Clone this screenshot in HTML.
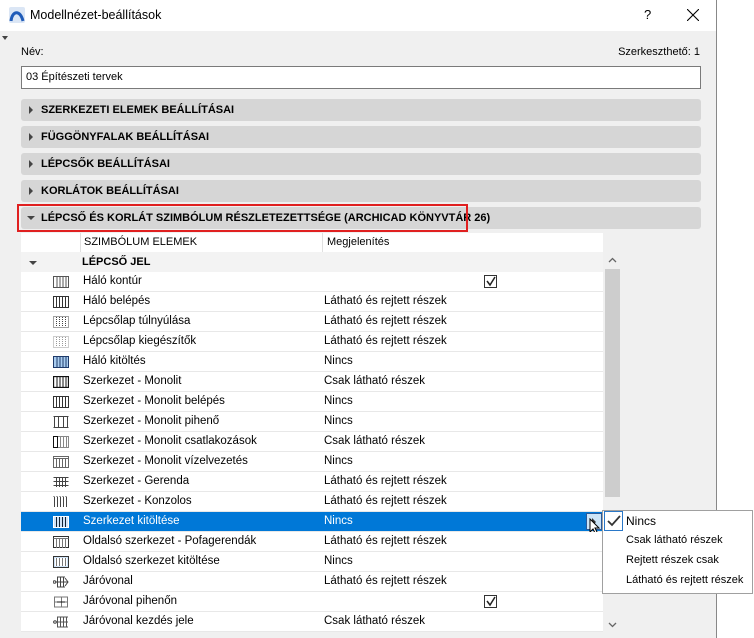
<!DOCTYPE html>
<html><head><meta charset="utf-8"><style>
*{margin:0;padding:0;box-sizing:border-box}
body{width:754px;height:638px;background:#fff;font-family:"Liberation Sans",sans-serif;font-size:12px;color:#000;position:relative;overflow:hidden}
.a{position:absolute}
.dlg{left:0;top:0;width:717px;height:638px;background:#f0f0f0;border-right:1px solid #888}
.title{left:0;top:0;width:716px;height:31px;background:#fff}
.bar{left:21px;width:680px;height:22px;background:#d6d6d6;border-radius:3px;font-weight:bold;font-size:11px;line-height:22px;padding-left:20px}
.bar:before{content:"";position:absolute;left:8px;top:7px;border-left:4px solid #444;border-top:4px solid transparent;border-bottom:4px solid transparent}
.bar.open:before{left:6px;top:9px;border-top:4px solid #444;border-left:4px solid transparent;border-right:4px solid transparent;border-bottom:0}
.row{left:21px;width:582px;height:20px;border-bottom:1px solid #e8e8e8;background:#fff;line-height:19px;font-size:11.5px}
.row .t{position:absolute;left:62px}
.row .v{position:absolute;left:303px}
.row svg{position:absolute;left:32px;top:4px}
.cb{position:absolute;left:463px;top:3px;width:13px;height:13px;border:1px solid #333;background:#fff}
.sel{background:#0078d7;color:#fff}
.mi{left:626px;font-size:12px}
</style></head><body>
<div class="a dlg"></div>
<div class="a title"></div>
<svg class="a" style="left:9px;top:7px" width="16" height="16"><rect x="0" y="0" width="16" height="16" rx="2" fill="#dbe6f5"/><path d="M2 14 C3 4 11 2 14 14" stroke="#1f5bb8" stroke-width="3" fill="none"/></svg>
<div class="a" style="left:30px;top:8px;font-size:12.5px">Modellnézet-beállítások</div>
<div class="a" style="left:644px;top:7px;font-size:13px">?</div>
<svg class="a" style="left:687px;top:9px" width="12" height="12"><path d="M0 0L12 12M12 0L0 12" stroke="#000" stroke-width="1.1"/></svg>
<div class="a" style="left:2px;top:36px;border-top:4px solid #444;border-left:3px solid transparent;border-right:3px solid transparent"></div>
<div class="a" style="left:21px;top:46px;font-size:11px">Név:</div>
<div class="a" style="right:54px;top:46px;font-size:11px">Szerkeszthető: 1</div>
<div class="a" style="left:21px;top:66px;width:680px;height:23px;background:#fff;border:1px solid #7a7a7a;padding-left:4px;line-height:20px;font-size:11px">03 Építészeti tervek</div>
<div class="a bar" style="top:99px">SZERKEZETI ELEMEK BEÁLLÍTÁSAI</div>
<div class="a bar" style="top:126px">FÜGGÖNYFALAK BEÁLLÍTÁSAI</div>
<div class="a bar" style="top:153px">LÉPCSŐK BEÁLLÍTÁSAI</div>
<div class="a bar" style="top:180px">KORLÁTOK BEÁLLÍTÁSAI</div>
<div class="a bar open" style="top:207px">LÉPCSŐ ÉS KORLÁT SZIMBÓLUM RÉSZLETEZETTSÉGE (ARCHICAD KÖNYVTÁR 26)</div>
<div class="a" style="left:17px;top:204px;width:451px;height:28px;border:2px solid #e02020"></div>
<div class="a" style="left:21px;top:233px;width:582px;height:19px;background:#fff;font-size:11px;line-height:19px">
<div class="a" style="left:59px;top:0;height:19px;border-left:1px solid #e0e0e0;padding-left:3px">SZIMBÓLUM ELEMEK</div>
<div class="a" style="left:301px;top:0;height:19px;border-left:1px solid #e0e0e0;padding-left:4px">Megjelenítés</div>
</div>
<div class="a" style="left:21px;top:252px;width:582px;height:20px;background:#f3f3f3;font-weight:bold;font-size:11px;line-height:20px">
<div class="a" style="left:8px;top:9px;border-top:4px solid #444;border-left:4px solid transparent;border-right:4px solid transparent"></div>
<span class="a" style="left:61px">LÉPCSŐ JEL</span></div>

<div class="a row" style="top:272px"><svg width="16" height="12"><rect x=".5" y=".5" width="15" height="11" fill="none" stroke="#555"/><path d="M4 1v10M7 1v10M10 1v10M13 1v10" stroke="#555"/></svg><span class="t">Háló kontúr</span><div class="cb" style="left:463px"><svg width="11" height="11" style="left:0;top:0"><path d="M2 5l3 4 5-8" stroke="#222" stroke-width="1.5" fill="none"/></svg></div></div>
<div class="a row" style="top:292px"><svg width="16" height="12"><rect x=".5" y=".5" width="15" height="11" fill="none" stroke="#333"/><path d="M3.5 1v10M6.5 1v10M9.5 1v10M12.5 1v10" stroke="#333"/></svg><span class="t">Háló belépés</span><span class="v">Látható és rejtett részek</span></div>
<div class="a row" style="top:312px"><svg width="16" height="12"><rect x=".5" y=".5" width="15" height="11" fill="none" stroke="#444" stroke-dasharray="1 1"/><path d="M3.5 1v10M6.5 1v10M9.5 1v10M12.5 1v10" stroke="#444" stroke-dasharray="1 1"/></svg><span class="t">Lépcsőlap túlnyúlása</span><span class="v">Látható és rejtett részek</span></div>
<div class="a row" style="top:332px"><svg width="16" height="12"><rect x=".5" y=".5" width="15" height="11" fill="none" stroke="#999" stroke-dasharray="1 1"/><path d="M3.5 1v10M6.5 1v10M9.5 1v10M12.5 1v10" stroke="#999" stroke-dasharray="1 1"/></svg><span class="t">Lépcsőlap kiegészítők</span><span class="v">Látható és rejtett részek</span></div>
<div class="a row" style="top:352px"><svg width="16" height="12"><rect x=".5" y=".5" width="15" height="11" fill="#a9cdf0" stroke="#1e3a6a"/><path d="M4 1v10M7 1v10M10 1v10M13 1v10" stroke="#1e3a6a"/></svg><span class="t">Háló kitöltés</span><span class="v">Nincs</span></div>
<div class="a row" style="top:372px"><svg width="16" height="12"><rect x=".5" y=".5" width="15" height="11" fill="none" stroke="#111" stroke-width="1.3"/><path d="M4 1v10M7 1v10M10 1v10M13 1v10" stroke="#111"/></svg><span class="t">Szerkezet - Monolit</span><span class="v">Csak látható részek</span></div>
<div class="a row" style="top:392px"><svg width="16" height="12"><rect x=".5" y=".5" width="15" height="11" fill="none" stroke="#333"/><path d="M3.5 1v10M6.5 1v10M9.5 1v10M12.5 1v10" stroke="#333"/></svg><span class="t">Szerkezet - Monolit belépés</span><span class="v">Nincs</span></div>
<div class="a row" style="top:412px"><svg width="16" height="12"><path d="M.5 .5h15M.5 11.5h15M1.5 1v10M5.5 1v10M10.5 1v10M14.5 1v10" stroke="#444"/></svg><span class="t">Szerkezet - Monolit pihenő</span><span class="v">Nincs</span></div>
<div class="a row" style="top:432px"><svg width="16" height="12"><rect x=".5" y=".5" width="15" height="11" fill="none" stroke="#888"/><rect x=".5" y=".5" width="4" height="11" fill="none" stroke="#111"/><path d="M7.5 1v10M10.5 1v10M13.5 1v10" stroke="#888"/></svg><span class="t">Szerkezet - Monolit csatlakozások</span><span class="v">Csak látható részek</span></div>
<div class="a row" style="top:452px"><svg width="16" height="12"><rect x=".5" y=".5" width="15" height="11" fill="none" stroke="#666"/><path d="M.5 2.5h15M3.5 2v10M6.5 2v10M9.5 2v10M12.5 2v10" stroke="#666"/></svg><span class="t">Szerkezet - Monolit vízelvezetés</span><span class="v">Nincs</span></div>
<div class="a row" style="top:472px"><svg width="16" height="12"><path d="M.5 1.5h15M.5 5.5h15M.5 9.5h15M3.5 1v10M6.5 1v10M9.5 1v10M12.5 1v10" stroke="#444"/></svg><span class="t">Szerkezet - Gerenda</span><span class="v">Látható és rejtett részek</span></div>
<div class="a row" style="top:492px"><svg width="16" height="12"><path d="M1.5 1v10M4.5 1v10M7.5 1v10M10.5 1v10M13.5 1v10" stroke="#444"/><path d="M.5 .5h15" stroke="#444" stroke-dasharray="1 2"/></svg><span class="t">Szerkezet - Konzolos</span><span class="v">Látható és rejtett részek</span></div>
<div class="a row sel" style="top:512px"><svg width="16" height="12"><rect x=".5" y=".5" width="15" height="11" fill="#cfe3f7" stroke="#fff"/><path d="M3.5 1v10M6.5 1v10M9.5 1v10M12.5 1v10" stroke="#123"/></svg><span class="t">Szerkezet kitöltése</span><span class="v">Nincs</span>
<div class="a" style="left:565px;top:1px;width:16px;height:17px;background:#cce4f7;border:1px solid #2a5a9a"></div><div class="a" style="left:571px;top:6px;border-left:4px solid #333;border-top:4px solid transparent;border-bottom:4px solid transparent"></div>
<svg class="a" style="left:568px;top:6px" width="12" height="18"><path d="M1 1v13l3-3 3 6 2-1-3-6h4z" fill="#fff" stroke="#000"/></svg></div>
<div class="a row" style="top:532px"><svg width="16" height="12"><rect x=".5" y=".5" width="15" height="11" fill="none" stroke="#333"/><path d="M.5 2.5h15M3.5 2v10M6.5 2v10M9.5 2v10M12.5 2v10" stroke="#777"/></svg><span class="t">Oldalsó szerkezet - Pofagerendák</span><span class="v">Látható és rejtett részek</span></div>
<div class="a row" style="top:552px"><svg width="16" height="12"><rect x=".5" y=".5" width="15" height="11" fill="#cfe3f7" stroke="#333"/><rect x="2" y="2" width="12" height="8" fill="#fff"/><path d="M3.5 2v8M6.5 2v8M9.5 2v8M12.5 2v8" stroke="#777"/></svg><span class="t">Oldalsó szerkezet kitöltése</span><span class="v">Nincs</span></div>
<div class="a row" style="top:572px"><svg width="16" height="12"><path d="M4.5 1v10M7.5 1v10M10.5 1v10M4 1h8M4 11h8M0 6h15M12 2l3 4-3 4" stroke="#444" fill="none"/><circle cx="1.5" cy="6" r="1.3" fill="#fff" stroke="#444"/></svg><span class="t">Járóvonal</span><span class="v">Látható és rejtett részek</span></div>
<div class="a row" style="top:592px"><svg width="16" height="12"><path d="M1.5 1v10M14.5 1v10M8.5 1v10M1 1h14M1 11h14M1 6h14" stroke="#777" fill="none"/><path d="M4 6h8" stroke="#111"/></svg><span class="t">Járóvonal pihenőn</span><div class="cb" style="left:463px"><svg width="11" height="11" style="left:0;top:0"><path d="M2 5l3 4 5-8" stroke="#222" stroke-width="1.5" fill="none"/></svg></div></div>
<div class="a row" style="top:612px"><svg width="16" height="12"><path d="M4.5 1v10M7.5 1v10M10.5 1v10M13.5 1v10M4 1h11M4 11h11M4 6h11M0 6h4" stroke="#555" fill="none"/><circle cx="2" cy="6" r="1.3" fill="#fff" stroke="#444"/></svg><span class="t">Járóvonal kezdés jele</span><span class="v">Csak látható részek</span></div>

<div class="a" style="left:604px;top:252px;width:17px;height:380px;background:#f0f0f0"></div>
<svg class="a" style="left:608px;top:257px" width="9" height="6"><path d="M1 5l3.5-3.5L8 5" stroke="#666" stroke-width="1.3" fill="none"/></svg>
<div class="a" style="left:605px;top:269px;width:15px;height:228px;background:#cdcdcd"></div>
<svg class="a" style="left:608px;top:622px" width="9" height="6"><path d="M1 1l3.5 3.5L8 1" stroke="#666" stroke-width="1.3" fill="none"/></svg>

<div class="a" style="left:602px;top:510px;width:151px;height:84px;background:#fff;border:1px solid #a0a0a0"></div>
<div class="a" style="left:604px;top:511px;width:19px;height:20px;border:1px solid #2a78c8;background:#fff"></div>
<svg class="a" style="left:607px;top:515px" width="14" height="12"><path d="M1 6l4 4 8-9" stroke="#333" stroke-width="1.8" fill="none"/></svg>
<div class="a mi" style="top:514px">Nincs</div>
<div class="a mi" style="top:534px;font-size:11px">Csak látható részek</div>
<div class="a mi" style="top:554px;font-size:11px">Rejtett részek csak</div>
<div class="a mi" style="top:574px;font-size:11px">Látható és rejtett részek</div>
</body></html>
